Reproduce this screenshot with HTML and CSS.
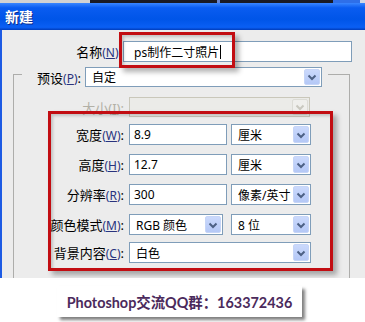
FILE: index.html
```html
<!DOCTYPE html>
<html lang="zh-CN">
<head>
<meta charset="utf-8">
<title>新建</title>
<link rel="stylesheet" href="styles.css">
</head>
<body>
<div class="strip"><span class="s1"></span><span class="s2"></span><span class="s3"></span><span class="s4"></span><span class="s5"></span><span class="s6"></span></div>
<div class="window">
  <div class="titlebar">新建</div>
  <div class="frame">
    <div class="row name-row">
      <span class="lbl name-lbl">名称<span class="mn">(<u>N</u>)</span>:</span>
      <div class="input name-input">ps制作二寸照片<span class="caret"></span></div>
    </div>
    <div class="group">
      <div class="row preset-row">
        <span class="lbl preset-lbl">预设<span class="mn">(<u>P</u>)</span>:</span>
        <div class="select w237"><span class="val">自定</span><span class="btn"><svg width="14" height="16" viewBox="0 0 14 16"><path d="M3.5 6.5 L7 10 L10.5 6.5" fill="none" stroke="#4d6185" stroke-width="2"/></svg></span></div>
      </div>
      <div class="row form-row size-row">
        <span class="lbl dis">大小(<u>I</u>):</span>
        <div class="select disabled w181"><span class="val"></span><span class="btn"><svg width="14" height="16" viewBox="0 0 14 16"><path d="M3.5 6.5 L7 10 L10.5 6.5" fill="none" stroke="#c9c8bf" stroke-width="2"/></svg></span></div>
      </div>
      <div class="row form-row r-w">
        <span class="lbl">宽度<span class="mn">(<u>W</u>)</span>:</span>
        <div class="input w98">8.9</div>
        <div class="select w80 gap4"><span class="val">厘米</span><span class="btn"><svg width="14" height="16" viewBox="0 0 14 16"><path d="M3.5 6.5 L7 10 L10.5 6.5" fill="none" stroke="#4d6185" stroke-width="2"/></svg></span></div>
      </div>
      <div class="row form-row r-h">
        <span class="lbl">高度<span class="mn">(<u>H</u>)</span>:</span>
        <div class="input w98">12.7</div>
        <div class="select w80 gap4"><span class="val">厘米</span><span class="btn"><svg width="14" height="16" viewBox="0 0 14 16"><path d="M3.5 6.5 L7 10 L10.5 6.5" fill="none" stroke="#4d6185" stroke-width="2"/></svg></span></div>
      </div>
      <div class="row form-row r-r">
        <span class="lbl">分辨率<span class="mn">(<u>R</u>)</span>:</span>
        <div class="input w98">300</div>
        <div class="select w80 gap4"><span class="val">像素/英寸</span><span class="btn"><svg width="14" height="16" viewBox="0 0 14 16"><path d="M3.5 6.5 L7 10 L10.5 6.5" fill="none" stroke="#4d6185" stroke-width="2"/></svg></span></div>
      </div>
      <div class="row form-row r-c">
        <span class="lbl">颜色模式<span class="mn">(<u>M</u>)</span>:</span>
        <div class="select w94"><span class="val">RGB 颜色</span><span class="btn"><svg width="14" height="16" viewBox="0 0 14 16"><path d="M3.5 6.5 L7 10 L10.5 6.5" fill="none" stroke="#4d6185" stroke-width="2"/></svg></span></div>
        <div class="select w80 gap8"><span class="val">8 位</span><span class="btn"><svg width="14" height="16" viewBox="0 0 14 16"><path d="M3.5 6.5 L7 10 L10.5 6.5" fill="none" stroke="#4d6185" stroke-width="2"/></svg></span></div>
      </div>
      <div class="row form-row r-bg">
        <span class="lbl">背景内容<span class="mn">(<u>C</u>)</span>:</span>
        <div class="select w182"><span class="val">白色</span><span class="btn"><svg width="14" height="16" viewBox="0 0 14 16"><path d="M3.5 6.5 L7 10 L10.5 6.5" fill="none" stroke="#4d6185" stroke-width="2"/></svg></span></div>
      </div>
    </div>
    <div class="mark mark-name"></div>
    <div class="mark mark-main"></div>
  </div>
</div>
<div class="banner">Photoshop交流QQ群：163372436</div>
</body>
</html>
```
FILE: styles.css
```css
* { box-sizing: border-box; }
body {
  margin: 0;
  width: 365px;
  height: 322px;
  overflow: hidden;
  background: #fff;
  font-family: "Noto Sans", "Noto Sans CJK SC", sans-serif;
  font-size: 12px;
  color: #000;
}
.strip { display: flex; height: 3px; }
.strip span { height: 3px; }
.s1 { width: 90px; background: #d2d2d2; }
.s2 { width: 127px; background: #1a1a22; }
.s3 { width: 3px; background: #6a86d0; }
.s4 { width: 113px; background: #1a1a22; }
.s5 { width: 27px; background: #2f6fe8; }
.s6 { flex: 1; background: #d0d8e6; }

.window { width: 365px; }
.titlebar {
  height: 27px;
  line-height: 27px;
  padding-left: 5px;
  color: #fff;
  font-family: "Noto Sans CJK SC", sans-serif;
  font-weight: bold;
  font-size: 14px;
  text-shadow: 1px 1px 0 #0a2a8c;
  background: linear-gradient(#3a86ff 0%, #0a5cf0 18%, #0055e8 60%, #0a5ff4 90%, #003cba 100%);
}
.frame {
  position: relative;
  height: 248px;
  border-left: 2px solid #1d5be4;
  background: #ececec;
  overflow: hidden;
  padding-top: 11px;
}
.row { display: flex; align-items: center; }
.lbl { flex: none; text-align: right; white-space: nowrap; font-size: 13px; }
.lbl u { text-decoration: underline; }
.mn { color: #28337e; font-size: 12px; }
.dis { color: #b2b0a6; }

.name-row { height: 21px; }
.name-lbl { width: 120px; margin-right: 1px; }
.input {
  flex: none;
  height: 100%;
  border: 1px solid #7f9db9;
  background: #fff;
  padding-left: 4px;
  display: flex;
  align-items: center;
}
.name-input { width: 229px; padding-left: 10px; }
.caret { display: inline-block; width: 1px; height: 14px; background: #000; margin-left: 1px; }

.group {
  margin: 12px 0 0 11px;
  width: 337px;
  height: 230px;
  border: 1px solid #adadab;
}
.preset-row {
  margin: -8px 0 0 8px;
  width: 306px;
  height: 20px;
  background: #ececec;
}
.preset-lbl { width: 59px; margin-right: 4px; }
.form-row { height: 21px; }
.form-row .lbl { width: 110px; margin-right: 5px; }
.size-row { margin-top: 10px; height: 20px; }
.r-w { margin-top: 7px; }
.r-h, .r-r, .r-c { margin-top: 9px; }
.r-bg { margin-top: 7px; }

.select {
  flex: none;
  display: flex;
  align-items: center;
  height: 100%;
  border: 1px solid #7f9db9;
  background: #fff;
  padding-left: 6px;
}
.select .val { flex: 1; white-space: nowrap; overflow: hidden; }
.select .btn {
  flex: none;
  align-self: stretch;
  width: 16px;
  margin: 1px;
  border: 1px solid #c6d5f7;
  border-radius: 2px;
  background: linear-gradient(#cbd9fc, #b4c8f6);
  display: flex;
  align-items: center;
  justify-content: center;
}
.select.disabled { border-color: #c9c7ba; background: #ebebe8; }
.select.disabled .btn { border-color: #dcdcd6; background: #efefec; }
.w237 { width: 237px; }
.w181 { width: 181px; }
.w98 { width: 98px; }
.w80 { width: 80px; }
.w94 { width: 94px; }
.w182 { width: 182px; }
.gap4 { margin-left: 4px; }
.gap8 { margin-left: 8px; }

.mark {
  position: absolute;
  border: 3px solid #c20d12;
  box-shadow: 4px 4px 5px rgba(0, 0, 0, 0.3), inset 2px 2px 3px rgba(0, 0, 0, 0.18);
}
.mark-name { left: 117px; top: 2px; width: 116px; height: 36px; }
.mark-main { left: 46px; top: 81px; width: 285px; height: 160px; }

.banner {
  margin: 8px 0 0 57px;
  width: 245px;
  height: 31px;
  background: #fff;
  box-shadow: 3px 3px 3px rgba(0, 0, 0, 0.5);
  display: flex;
  align-items: center;
  justify-content: center;
  font-family: "Lato", "Noto Sans CJK SC", sans-serif;
  font-weight: bold;
  font-size: 14.4px;
  color: #4b2a5c;
}
```
